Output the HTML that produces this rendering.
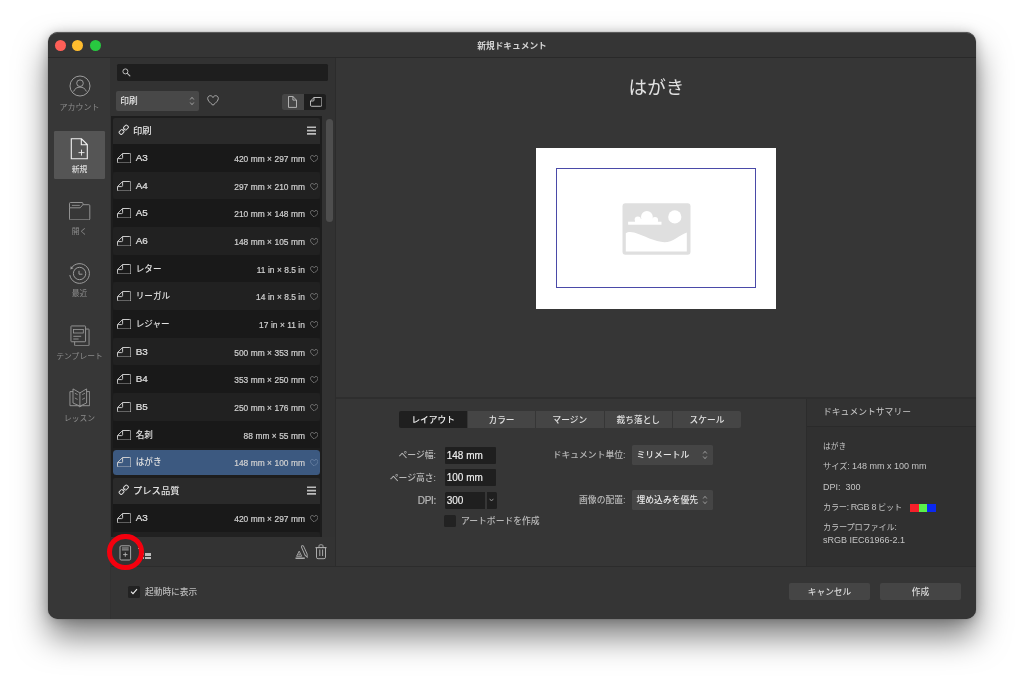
<!DOCTYPE html>
<html lang="ja">
<head>
<meta charset="utf-8">
<title>新規ドキュメント</title>
<style>
*{box-sizing:border-box;margin:0;padding:0}
html,body{width:1024px;height:683px;overflow:hidden;background:#fff}
body{position:relative;font-family:"Liberation Sans","Noto Sans CJK JP",sans-serif;color:#ddd;font-size:9px;line-height:1}
.abs{position:absolute}
#win{will-change:transform;position:absolute;left:48px;top:32px;width:928px;height:587px;border-radius:10px;background:#363636;overflow:hidden}
#shadow{position:absolute;left:48px;top:32px;width:928px;height:587px;border-radius:10px;box-shadow:0 0 1px rgba(0,0,0,.5),0 18px 32px rgba(0,0,0,.5),0 1px 12px rgba(0,0,0,.22)}
#titlebar{position:absolute;left:0;top:0;width:928px;height:26px;background:#353535;border-bottom:1px solid #292929;border-top:1px solid #5a5a5a;border-radius:10px 10px 0 0}
#title{position:absolute;left:0;width:928px;top:8.600px;text-align:center;font-size:8.700px;font-weight:700;color:#d4d4d4;letter-spacing:0}
.tl{position:absolute;top:6.800px;width:11px;height:11px;border-radius:50%}
#sidebar{position:absolute;left:0;top:26px;width:63px;height:561px;background:#373737;border-right:1px solid #323232}
.sbl{position:absolute;left:0;width:63px;text-align:center;font-size:7.8px;color:#8c8c8c}
.sbi{position:absolute;fill:none;stroke:#9c9c9c;stroke-width:1}
#lp{position:absolute;left:63px;top:26px;width:224px;height:509px;background:#323232}
#lpline{position:absolute;left:287px;top:26px;width:1px;height:509px;background:#2c2c2c}
#search{position:absolute;left:5.800px;top:5.500px;width:211.700px;height:17.500px;background:#1e1e1e;border-radius:1.500px}
#dd{position:absolute;left:5px;top:33.300px;width:83px;height:19.800px;background:#484848;border-radius:2px;color:#e6e6e6;font-size:9px}
#list{position:absolute;left:0;top:58px;width:211px;height:421px;background:#1d1d1d;overflow:hidden}
.row{position:absolute;left:2px;width:207px;height:27.7px}
.row.d{background:#191919}
.row.l{background:#212121;border-radius:3px}
.row.h{background:#2a2a2a;height:25.8px;border-radius:2px 2px 0 0}
.row.sel{background:#3c5980;border-radius:3.500px;margin-top:1.500px;height:25.800px !important}
.row.sel .nm,.row.sel .sz,.row.sel svg{margin-top:-1.500px}
.row.sel svg.ht path{stroke:#7088a8}
.row .nm{position:absolute;left:22.700px;top:9px;font-size:9.900px;font-weight:500;-webkit-text-stroke:.2px;color:#e2e2e2}
.row .nm.cj{font-size:8.600px;top:9.800px;-webkit-text-stroke:0}
.row.h .nm{-webkit-text-stroke:0;left:20px;top:8.8px;font-size:9.3px}
.row .sz{position:absolute;right:15px;top:11.2px;font-size:8.4px;font-weight:500;-webkit-text-stroke:.2px;color:#d0d0d0;letter-spacing:.05px}
.row svg.pg{position:absolute;left:3.500px;top:8.500px}
.row svg.ht{position:absolute;right:1.700px;top:10.600px}
.row svg.lk{position:absolute;left:4.600px;top:6.400px;width:11.500px;height:11.500px}
.ham{position:absolute;left:193.800px;top:7.900px;width:9px;height:9px}
.ham i{display:block;height:1.700px;background:#c8c8c8;margin-bottom:1.6px;border-radius:.5px}
#tb{position:absolute;left:63px;top:505px;width:224px;height:30px;background:#333}
#sepline{position:absolute;left:63px;top:534px;width:865px;height:1px;background:#2c2c2c}
#footer{position:absolute;left:63px;top:535px;width:865px;height:52px;background:#353535}
.btn{position:absolute;top:15.800px;height:17px;width:81px;background:#454545;border-radius:2px;text-align:center;font-size:8.700px;font-weight:500;color:#d8d8d8;line-height:19px}
#pv{position:absolute;left:288px;top:26px;width:640px;height:340px;background:#363636}
#pvtitle{position:absolute;left:1px;width:639px;top:20.600px;text-align:center;font-size:18.600px;color:#e2e2e2}
#paper{position:absolute;left:200px;top:90px;width:239.5px;height:161px;background:#fff}
#blue{position:absolute;left:20px;top:19.5px;width:200px;height:120.5px;border:1px solid #4a4aa8}
#optline{position:absolute;left:288px;top:365.300px;width:640px;height:1.600px;background:#2e2e2e;z-index:2}
#opt{position:absolute;left:289px;top:367px;width:470px;height:167px;background:#363636;box-shadow:-1px 0 0 #363636}
.tab{position:absolute;top:12px;height:17px;width:67.6px;padding-top:1px;background:#454545;text-align:center;font-size:8.7px;font-weight:500;color:#e0e0e0;line-height:17px}
.tab.on{background:#1f1f1f;color:#f2f2f2}
.lbl{position:absolute;text-align:right;font-size:8.800px;font-weight:500;color:#b8b8b8;white-space:nowrap}
.inp{position:absolute;background:#1f1f1f;border-radius:1px;color:#f0f0f0;font-size:10px;-webkit-text-stroke:.15px;padding-left:2px}
.sel2{position:absolute;left:295px;width:80.500px;height:20.400px;background:#454545;border-radius:1.500px;color:#e8e8e8;font-size:8.8px;font-weight:500;padding-left:4.500px;line-height:21.500px}
#sum{position:absolute;left:758px;top:366px;width:170px;height:168px;background:#303030;border-left:1px solid #2c2c2c}
#sumh{position:absolute;left:0;top:0;width:169px;height:28.500px;background:#323232;border-bottom:1px solid #2a2a2a}
.st{position:absolute;left:16px;font-size:8.2px;color:#c4c4c4;white-space:nowrap}
.la{font-size:9px}
</style>
</head>
<body>
<div id="shadow"></div>
<div id="win">
  <div id="sidebar">
    <svg class="sbi" style="left:20.500px;top:17.400px" width="22" height="22" viewBox="0 0 22 22"><circle cx="11" cy="11" r="10"/><circle cx="11" cy="8.200" r="3.300"/><path d="M4.600 16.500C5.700 13.600 8.200 12.100 11 12.100C13.800 12.100 16.300 13.600 17.400 16.500"/></svg>
    <div class="sbl" style="top:46.200px;font-size:8px">アカウント</div>
    <div class="abs" style="left:5.5px;top:72.500px;width:51.500px;height:48px;background:#555;border-radius:1.200px"></div>
    <svg class="sbi" style="left:22px;top:80px;stroke:#f2f2f2;stroke-width:1.1" width="19" height="22" viewBox="0 0 19 22"><path d="M1.300 .8H11.500L17.300 6.600V20.800H1.300Z M11.300 .8V6.800H17.300"/><path d="M11.500 11.600V17.600M8.500 14.600H14.500" stroke-width=".9"/></svg>
    <div class="sbl" style="top:108.300px;color:#dcdcdc;font-weight:500">新規</div>
    <svg class="sbi" style="left:20.500px;top:143.800px;stroke-width:.9" width="22" height="18.500" viewBox="0 0 22 18.500"><path d="M.5 5.800V1.500Q.5 .5 1.500 .5H13Q13.900 .5 13.900 1.400V2.700"/><path d="M2.900 3.400H10.800" stroke-width=".8"/><path d="M.5 5.800V16.900Q.5 17.900 1.500 17.900H19.800Q20.800 17.900 20.800 16.900V3.700Q20.800 2.700 19.800 2.700H13.900L11.200 5.800H.5"/></svg>
    <div class="sbl" style="top:169.900px">開く</div>
    <svg class="sbi" style="left:20px;top:203.500px;stroke-width:1" width="23" height="23" viewBox="0 0 23 23"><path d="M3.390 5.990A9.850 9.850 0 1 1 1.830 13.040"/><path d="M2.400 7.400L2.700 4.300L5.500 6.200Z" fill="#9a9a9a" stroke="none"/><circle cx="11.560" cy="11.500" r="6.200"/><path d="M11 8.800V12.200H14.400"/></svg>
    <div class="sbl" style="top:232.100px">最近</div>
    <svg class="sbi" style="left:22.300px;top:266.700px;stroke-width:.9" width="20" height="21.500" viewBox="0 0 20 21.500"><rect x=".95" y=".95" width="14.600" height="15.800" rx=".6"/><path d="M15.550 4.050H18.450Q19.050 4.050 19.050 4.650V20.150Q19.050 20.750 18.450 20.750H5.250Q4.650 20.750 4.650 20.150V16.750"/><rect x="3.500" y="4.400" width="9.800" height="3.600" stroke-width=".8"/><path d="M3.300 11.300H11.200M3.300 14H8.600" stroke-width=".9"/></svg>
    <div class="sbl" style="top:294.600px;font-size:7.800px">テンプレート</div>
    <svg class="sbi" style="left:20.700px;top:329.600px;stroke-width:.9" width="21.600" height="20" viewBox="0 0 21.600 20"><path d="M4 .9L10.900 4.900V18.100L4 15Z"/><path d="M10.900 4.900L17.600 .9V15L10.900 18.100"/><path d="M4 3.600H.95V17.700H8.500Q10 17.900 10.900 19Q11.800 17.900 13.300 17.700H20.650V3.600H17.600"/><path d="M5.800 5.200L8.600 6.600M5.800 10L8.600 11.400M16 5.200L13.200 6.600M16 10L13.200 11.400" stroke-width=".8"/></svg>
    <div class="sbl" style="top:357.400px">レッスン</div>
  </div>
  <div id="lp">
    <div id="search">
      <svg class="abs" style="left:5.300px;top:4.600px" width="9" height="9" viewBox="0 0 9 9"><circle cx="3.400" cy="3.400" r="2.500" fill="none" stroke="#bcbcbc" stroke-width="1"/><path d="M5.300 5.300L7.900 7.900" stroke="#bcbcbc" stroke-width="1.100" stroke-linecap="round"/></svg>
    </div>
    <div id="dd"><span class="abs" style="left:4.200px;top:5.700px;font-weight:500;font-size:8.700px">印刷</span>
      <svg class="abs" style="left:73px;top:5px" width="6" height="10" viewBox="0 0 6 10"><path d="M1.200 3.500L3 1.300L4.800 3.500M1.200 6.500L3 8.700L4.800 6.500" fill="none" stroke="#b0b0b0" stroke-width=".85"/></svg>
    </div>
    <svg class="abs" style="left:95.5px;top:36.5px" width="12" height="11" viewBox="0 0 12 11"><path d="M6 10.2C3 7.8 .7 5.6 .7 3.4C.7 1.8 1.9 .7 3.3 .7C4.5 .7 5.5 1.4 6 2.5C6.5 1.4 7.5 .7 8.7 .7C10.1 .7 11.3 1.8 11.3 3.4C11.3 5.6 9 7.8 6 10.2Z" fill="none" stroke="#b8b8b8" stroke-width=".9"/></svg>
    <div class="abs" style="left:170.600px;top:35.600px;width:22.400px;height:16.800px;background:#464646;border-radius:2.500px 0 0 2.500px"></div>
    <div class="abs" style="left:193px;top:35.600px;width:22.400px;height:16.800px;background:#1e1e1e;border-radius:0 2.500px 2.500px 0"></div>
    <svg class="abs" style="left:176.850px;top:38.150px" width="9" height="12" viewBox="0 0 9 12"><path d="M.5 .5H4.900L8.500 4.100V11.400H.5Z M4.900 .5V4.100H8.500" fill="none" stroke="#c4c4c4" stroke-width=".85"/></svg>
    <svg class="abs" style="left:198.800px;top:38.900px" width="12.400" height="9.800" viewBox="0 0 12.400 9.800"><path d="M4 .5H10.800Q11.900 .5 11.900 1.600V8.200Q11.900 9.300 10.800 9.300H1.600Q.5 9.300 .5 8.200V4Z M4 .5V3.100Q4 4 3.100 4H.5" fill="none" stroke="#cccccc" stroke-width=".9"/></svg>
    <div id="list">
      <div class="row h" style="top:2px;height:26px"><svg class="lk" width="12" height="12" viewBox="0 0 12 12"><g fill="none" stroke="#d6d6d6" stroke-width="1"><rect x="-2.4" y="-1.9" width="4.8" height="3.8" rx="1.1" transform="translate(3.7 8.3) rotate(-45)"/><rect x="-2.4" y="-1.9" width="4.8" height="3.8" rx="1.1" transform="translate(8.3 3.7) rotate(-45)"/><path d="M4.6 7.4L7.4 4.6"/></g></svg><span class="nm">印刷</span><svg class="ham" viewBox="0 0 9 9"><path d="M0 1.300H9M0 4.600H9M0 7.900H9" stroke="#bdbdbd" stroke-width="1.600" fill="none"/></svg></div>
      <div class="row d" style="top:28px;height:28px"><svg class="pg" width="14.400" height="10.600" viewBox="0 0 14.400 10.600"><path d="M5.600 .5H12.700Q13.900 .5 13.900 1.700V8.900Q13.900 10.100 12.700 10.100H1.700Q.5 10.100 .5 8.900V5.600Z M5.600 .5V4.600Q5.600 5.600 4.600 5.600H.5" fill="none" stroke="#d2d2d2" stroke-width=".95"/></svg><span class="nm">A3</span><span class="sz">420 mm × 297 mm</span><svg class="ht" width="8.400" height="7.700" viewBox="0 0 12 11"><path d="M6 10.2C3 7.8 .7 5.6 .7 3.4C.7 1.8 1.9 .7 3.3 .7C4.5 .7 5.5 1.4 6 2.5C6.5 1.4 7.5 .7 8.7 .7C10.1 .7 11.3 1.8 11.3 3.4C11.3 5.6 9 7.8 6 10.2Z" fill="none" stroke="#8a8a8a" stroke-width="1.1"/></svg></div>
      <div class="row l" style="top:56px;height:27px"><svg class="pg" width="14.400" height="10.600" viewBox="0 0 14.400 10.600"><path d="M5.600 .5H12.700Q13.900 .5 13.900 1.700V8.900Q13.900 10.100 12.700 10.100H1.700Q.5 10.100 .5 8.900V5.600Z M5.600 .5V4.600Q5.600 5.600 4.600 5.600H.5" fill="none" stroke="#d2d2d2" stroke-width=".95"/></svg><span class="nm">A4</span><span class="sz">297 mm × 210 mm</span><svg class="ht" width="8.400" height="7.700" viewBox="0 0 12 11"><path d="M6 10.2C3 7.8 .7 5.6 .7 3.4C.7 1.8 1.9 .7 3.3 .7C4.5 .7 5.5 1.4 6 2.5C6.5 1.4 7.5 .7 8.7 .7C10.1 .7 11.3 1.8 11.3 3.4C11.3 5.6 9 7.8 6 10.2Z" fill="none" stroke="#8a8a8a" stroke-width="1.1"/></svg></div>
      <div class="row d" style="top:83px;height:28px"><svg class="pg" width="14.400" height="10.600" viewBox="0 0 14.400 10.600"><path d="M5.600 .5H12.700Q13.900 .5 13.900 1.700V8.900Q13.900 10.100 12.700 10.100H1.700Q.5 10.100 .5 8.900V5.600Z M5.600 .5V4.600Q5.600 5.600 4.600 5.600H.5" fill="none" stroke="#d2d2d2" stroke-width=".95"/></svg><span class="nm">A5</span><span class="sz">210 mm × 148 mm</span><svg class="ht" width="8.400" height="7.700" viewBox="0 0 12 11"><path d="M6 10.2C3 7.8 .7 5.6 .7 3.4C.7 1.8 1.9 .7 3.3 .7C4.5 .7 5.5 1.4 6 2.5C6.5 1.4 7.5 .7 8.7 .7C10.1 .7 11.3 1.8 11.3 3.4C11.3 5.6 9 7.8 6 10.2Z" fill="none" stroke="#8a8a8a" stroke-width="1.1"/></svg></div>
      <div class="row l" style="top:111px;height:28px"><svg class="pg" width="14.400" height="10.600" viewBox="0 0 14.400 10.600"><path d="M5.600 .5H12.700Q13.900 .5 13.900 1.700V8.900Q13.900 10.100 12.700 10.100H1.700Q.5 10.100 .5 8.900V5.600Z M5.600 .5V4.600Q5.600 5.600 4.600 5.600H.5" fill="none" stroke="#d2d2d2" stroke-width=".95"/></svg><span class="nm">A6</span><span class="sz">148 mm × 105 mm</span><svg class="ht" width="8.400" height="7.700" viewBox="0 0 12 11"><path d="M6 10.2C3 7.8 .7 5.6 .7 3.4C.7 1.8 1.9 .7 3.3 .7C4.5 .7 5.5 1.4 6 2.5C6.5 1.4 7.5 .7 8.7 .7C10.1 .7 11.3 1.8 11.3 3.4C11.3 5.6 9 7.8 6 10.2Z" fill="none" stroke="#8a8a8a" stroke-width="1.1"/></svg></div>
      <div class="row d" style="top:139px;height:27px"><svg class="pg" width="14.400" height="10.600" viewBox="0 0 14.400 10.600"><path d="M5.600 .5H12.700Q13.900 .5 13.900 1.700V8.900Q13.900 10.100 12.700 10.100H1.700Q.5 10.100 .5 8.900V5.600Z M5.600 .5V4.600Q5.600 5.600 4.600 5.600H.5" fill="none" stroke="#d2d2d2" stroke-width=".95"/></svg><span class="nm cj">レター</span><span class="sz">11 in × 8.5 in</span><svg class="ht" width="8.400" height="7.700" viewBox="0 0 12 11"><path d="M6 10.2C3 7.8 .7 5.6 .7 3.4C.7 1.8 1.9 .7 3.3 .7C4.5 .7 5.5 1.4 6 2.5C6.5 1.4 7.5 .7 8.7 .7C10.1 .7 11.3 1.8 11.3 3.4C11.3 5.6 9 7.8 6 10.2Z" fill="none" stroke="#8a8a8a" stroke-width="1.1"/></svg></div>
      <div class="row l" style="top:166px;height:28px"><svg class="pg" width="14.400" height="10.600" viewBox="0 0 14.400 10.600"><path d="M5.600 .5H12.700Q13.900 .5 13.900 1.700V8.900Q13.900 10.100 12.700 10.100H1.700Q.5 10.100 .5 8.900V5.600Z M5.600 .5V4.600Q5.600 5.600 4.600 5.600H.5" fill="none" stroke="#d2d2d2" stroke-width=".95"/></svg><span class="nm cj">リーガル</span><span class="sz">14 in × 8.5 in</span><svg class="ht" width="8.400" height="7.700" viewBox="0 0 12 11"><path d="M6 10.2C3 7.8 .7 5.6 .7 3.4C.7 1.8 1.9 .7 3.3 .7C4.5 .7 5.5 1.4 6 2.5C6.5 1.4 7.5 .7 8.7 .7C10.1 .7 11.3 1.8 11.3 3.4C11.3 5.6 9 7.8 6 10.2Z" fill="none" stroke="#8a8a8a" stroke-width="1.1"/></svg></div>
      <div class="row d" style="top:194px;height:28px"><svg class="pg" width="14.400" height="10.600" viewBox="0 0 14.400 10.600"><path d="M5.600 .5H12.700Q13.900 .5 13.900 1.700V8.900Q13.900 10.100 12.700 10.100H1.700Q.5 10.100 .5 8.900V5.600Z M5.600 .5V4.600Q5.600 5.600 4.600 5.600H.5" fill="none" stroke="#d2d2d2" stroke-width=".95"/></svg><span class="nm cj">レジャー</span><span class="sz">17 in × 11 in</span><svg class="ht" width="8.400" height="7.700" viewBox="0 0 12 11"><path d="M6 10.2C3 7.8 .7 5.6 .7 3.4C.7 1.8 1.9 .7 3.3 .7C4.5 .7 5.5 1.4 6 2.5C6.5 1.4 7.5 .7 8.7 .7C10.1 .7 11.3 1.8 11.3 3.4C11.3 5.6 9 7.8 6 10.2Z" fill="none" stroke="#8a8a8a" stroke-width="1.1"/></svg></div>
      <div class="row l" style="top:222px;height:27px"><svg class="pg" width="14.400" height="10.600" viewBox="0 0 14.400 10.600"><path d="M5.600 .5H12.700Q13.900 .5 13.900 1.700V8.900Q13.900 10.100 12.700 10.100H1.700Q.5 10.100 .5 8.900V5.600Z M5.600 .5V4.600Q5.600 5.600 4.600 5.600H.5" fill="none" stroke="#d2d2d2" stroke-width=".95"/></svg><span class="nm">B3</span><span class="sz">500 mm × 353 mm</span><svg class="ht" width="8.400" height="7.700" viewBox="0 0 12 11"><path d="M6 10.2C3 7.8 .7 5.6 .7 3.4C.7 1.8 1.9 .7 3.3 .7C4.5 .7 5.5 1.4 6 2.5C6.5 1.4 7.5 .7 8.7 .7C10.1 .7 11.3 1.8 11.3 3.4C11.3 5.6 9 7.8 6 10.2Z" fill="none" stroke="#8a8a8a" stroke-width="1.1"/></svg></div>
      <div class="row d" style="top:249px;height:28px"><svg class="pg" width="14.400" height="10.600" viewBox="0 0 14.400 10.600"><path d="M5.600 .5H12.700Q13.900 .5 13.900 1.700V8.900Q13.900 10.100 12.700 10.100H1.700Q.5 10.100 .5 8.900V5.600Z M5.600 .5V4.600Q5.600 5.600 4.600 5.600H.5" fill="none" stroke="#d2d2d2" stroke-width=".95"/></svg><span class="nm">B4</span><span class="sz">353 mm × 250 mm</span><svg class="ht" width="8.400" height="7.700" viewBox="0 0 12 11"><path d="M6 10.2C3 7.8 .7 5.6 .7 3.4C.7 1.8 1.9 .7 3.3 .7C4.5 .7 5.5 1.4 6 2.5C6.5 1.4 7.5 .7 8.7 .7C10.1 .7 11.3 1.8 11.3 3.4C11.3 5.6 9 7.8 6 10.2Z" fill="none" stroke="#8a8a8a" stroke-width="1.1"/></svg></div>
      <div class="row l" style="top:277px;height:28px"><svg class="pg" width="14.400" height="10.600" viewBox="0 0 14.400 10.600"><path d="M5.600 .5H12.700Q13.900 .5 13.900 1.700V8.900Q13.900 10.100 12.700 10.100H1.700Q.5 10.100 .5 8.900V5.600Z M5.600 .5V4.600Q5.600 5.600 4.600 5.600H.5" fill="none" stroke="#d2d2d2" stroke-width=".95"/></svg><span class="nm">B5</span><span class="sz">250 mm × 176 mm</span><svg class="ht" width="8.400" height="7.700" viewBox="0 0 12 11"><path d="M6 10.2C3 7.8 .7 5.6 .7 3.4C.7 1.8 1.9 .7 3.3 .7C4.5 .7 5.5 1.4 6 2.5C6.5 1.4 7.5 .7 8.7 .7C10.1 .7 11.3 1.8 11.3 3.4C11.3 5.6 9 7.8 6 10.2Z" fill="none" stroke="#8a8a8a" stroke-width="1.1"/></svg></div>
      <div class="row d" style="top:305px;height:27px"><svg class="pg" width="14.400" height="10.600" viewBox="0 0 14.400 10.600"><path d="M5.600 .5H12.700Q13.900 .5 13.900 1.700V8.900Q13.900 10.100 12.700 10.100H1.700Q.5 10.100 .5 8.900V5.600Z M5.600 .5V4.600Q5.600 5.600 4.600 5.600H.5" fill="none" stroke="#d2d2d2" stroke-width=".95"/></svg><span class="nm cj">名刺</span><span class="sz">88 mm × 55 mm</span><svg class="ht" width="8.400" height="7.700" viewBox="0 0 12 11"><path d="M6 10.2C3 7.8 .7 5.6 .7 3.4C.7 1.8 1.9 .7 3.3 .7C4.5 .7 5.5 1.4 6 2.5C6.5 1.4 7.5 .7 8.7 .7C10.1 .7 11.3 1.8 11.3 3.4C11.3 5.6 9 7.8 6 10.2Z" fill="none" stroke="#8a8a8a" stroke-width="1.1"/></svg></div>
      <div class="row sel" style="top:332px;height:28px"><svg class="pg" width="14.400" height="10.600" viewBox="0 0 14.400 10.600"><path d="M5.600 .5H12.700Q13.900 .5 13.900 1.700V8.900Q13.900 10.100 12.700 10.100H1.700Q.5 10.100 .5 8.900V5.600Z M5.600 .5V4.600Q5.600 5.600 4.600 5.600H.5" fill="none" stroke="#d2d2d2" stroke-width=".95"/></svg><span class="nm cj">はがき</span><span class="sz">148 mm × 100 mm</span><svg class="ht" width="8.400" height="7.700" viewBox="0 0 12 11"><path d="M6 10.2C3 7.8 .7 5.6 .7 3.4C.7 1.8 1.9 .7 3.3 .7C4.5 .7 5.5 1.4 6 2.5C6.5 1.4 7.5 .7 8.7 .7C10.1 .7 11.3 1.8 11.3 3.4C11.3 5.6 9 7.8 6 10.2Z" fill="none" stroke="#8a8a8a" stroke-width="1.1"/></svg></div>
      <div class="row h" style="top:362px;height:26px"><svg class="lk" width="12" height="12" viewBox="0 0 12 12"><g fill="none" stroke="#d6d6d6" stroke-width="1"><rect x="-2.4" y="-1.9" width="4.8" height="3.8" rx="1.1" transform="translate(3.7 8.3) rotate(-45)"/><rect x="-2.4" y="-1.9" width="4.8" height="3.8" rx="1.1" transform="translate(8.3 3.7) rotate(-45)"/><path d="M4.6 7.4L7.4 4.6"/></g></svg><span class="nm">プレス品質</span><svg class="ham" viewBox="0 0 9 9"><path d="M0 1.300H9M0 4.600H9M0 7.900H9" stroke="#bdbdbd" stroke-width="1.600" fill="none"/></svg></div>
      <div class="row d" style="top:388px;height:28px"><svg class="pg" width="14.400" height="10.600" viewBox="0 0 14.400 10.600"><path d="M5.600 .5H12.700Q13.900 .5 13.900 1.700V8.900Q13.900 10.100 12.700 10.100H1.700Q.5 10.100 .5 8.900V5.600Z M5.600 .5V4.600Q5.600 5.600 4.600 5.600H.5" fill="none" stroke="#d2d2d2" stroke-width=".95"/></svg><span class="nm">A3</span><span class="sz">420 mm × 297 mm</span><svg class="ht" width="8.400" height="7.700" viewBox="0 0 12 11"><path d="M6 10.2C3 7.8 .7 5.6 .7 3.4C.7 1.8 1.9 .7 3.3 .7C4.5 .7 5.5 1.4 6 2.5C6.5 1.4 7.5 .7 8.7 .7C10.1 .7 11.3 1.8 11.3 3.4C11.3 5.6 9 7.8 6 10.2Z" fill="none" stroke="#8a8a8a" stroke-width="1.1"/></svg></div>
      <div class="row l" style="top:416px;height:27px"><svg class="pg" width="14.400" height="10.600" viewBox="0 0 14.400 10.600"><path d="M5.600 .5H12.700Q13.900 .5 13.900 1.700V8.900Q13.900 10.100 12.700 10.100H1.700Q.5 10.100 .5 8.900V5.600Z M5.600 .5V4.600Q5.600 5.600 4.600 5.600H.5" fill="none" stroke="#d2d2d2" stroke-width=".95"/></svg><span class="nm">A4</span><span class="sz">297 mm × 210 mm</span><svg class="ht" width="8.400" height="7.700" viewBox="0 0 12 11"><path d="M6 10.2C3 7.8 .7 5.6 .7 3.4C.7 1.8 1.9 .7 3.3 .7C4.5 .7 5.5 1.4 6 2.5C6.5 1.4 7.5 .7 8.7 .7C10.1 .7 11.3 1.8 11.3 3.4C11.3 5.6 9 7.8 6 10.2Z" fill="none" stroke="#8a8a8a" stroke-width="1.1"/></svg></div>
    </div>
    <div class="abs" style="left:215.100px;top:60.500px;width:6.600px;height:103px;border-radius:3.500px;background:#4e4e4e"></div>
  </div>
  <div id="lpline"></div>
  <div id="tb">
    <svg class="abs" style="left:8.400px;top:7.500px" width="13" height="16" viewBox="0 0 13 16"><g fill="none" stroke="#b6b6b6" stroke-width=".9"><rect x="1" y=".8" width="10.600" height="14.200" rx="1.200" fill="#2c2c2c"/><path d="M2.900 3H9.700M2.900 4.900H9.700" stroke-width=".9"/><path d="M6.300 7.400V11.800M4.100 9.600H8.500" stroke-width=".9"/></g></svg>
    <div class="abs" style="left:26.800px;top:11.300px;width:1.500px;height:1px;background:#bbb"></div>
    <div class="abs" style="left:31.500px;top:16.300px;width:1.500px;height:1.500px;background:#aaa"></div>
    <div class="abs" style="left:31.500px;top:20px;width:1.500px;height:1.500px;background:#aaa"></div>
    <div class="abs" style="left:34.300px;top:16.200px;width:5.800px;height:2.500px;background:#bcbcbc"></div>
    <div class="abs" style="left:34.300px;top:19.900px;width:5.800px;height:2.500px;background:#bcbcbc"></div>
    <svg class="abs" style="left:184px;top:7px" width="14" height="16" viewBox="0 0 14 16"><g fill="none" stroke="#ababab" stroke-width=".9"><path d="M1.600 12.300L4.200 7.100L6.700 12.300Z"/><path d="M3.500 11L4.200 9.700L4.900 11Z" stroke-width=".6"/><path d="M.5 14.200H9.800" stroke-width="1.500"/><g transform="translate(7.100 1.700) rotate(-24)"><path d="M-1.150 1.200A1.150 1.150 0 0 1 1.150 1.200V9.800L0 12.600L-1.150 9.800Z"/></g></g></svg>
    <svg class="abs" style="left:203.500px;top:7px" width="12" height="16" viewBox="0 0 12 16"><g fill="none" stroke="#ababab" stroke-width="1"><path d="M4 3.300V1.800Q4 .8 5 .8H7Q8 .8 8 1.800V3.300" stroke-width=".9"/><path d="M.5 3.600H11.500" stroke-width="1.200"/><path d="M1.500 4V13.200Q1.500 14.700 3 14.700H9Q10.500 14.700 10.500 13.200V4"/><path d="M4.800 5.500V12M7.600 5.500V12" stroke-width="1"/></g></svg>
  </div>
  <div id="pv">
    <div id="pvtitle">はがき</div>
    <div id="paper"><div id="blue"></div>
      <svg class="abs" style="left:85.5px;top:54.5px" width="69" height="52" viewBox="0 0 69 52"><rect x=".5" y=".3" width="68" height="51.5" rx="3" fill="#dfdfdf"/><circle cx="52.8" cy="13.9" r="6.6" fill="#fff"/><g fill="#fff"><rect x="6.100" y="18.700" width="33.400" height="3"/><circle cx="24.900" cy="14" r="5.900"/><circle cx="15.800" cy="16.600" r="3.100"/><circle cx="33" cy="17" r="3.100"/><rect x="13" y="16" width="22.800" height="4"/></g><path d="M3.8 30.2C5.5 29 8.5 28.6 12 29.6C22 32.5 33 39.2 42.5 39.2C51 39.2 57 32 64.8 29.4V48.6H3.8Z" fill="#fff"/></svg>
    </div>
  </div>
  <div id="optline"></div>
  <div id="opt">
    <div class="tab on" style="left:62.3px;border-radius:2px 0 0 2px">レイアウト</div>
    <div class="tab" style="left:130.7px">カラー</div>
    <div class="tab" style="left:199.1px">マージン</div>
    <div class="tab" style="left:267.5px">裁ち落とし</div>
    <div class="tab" style="left:335.900px;width:68.200px;border-radius:0 2px 2px 0">スケール</div>

    <div class="lbl" style="right:371px;top:52px">ページ幅:</div>
    <div class="lbl" style="right:371px;top:74.5px">ページ高さ:</div>
    <div class="lbl" style="right:371px;top:96.500px;font-family:'Liberation Sans',sans-serif;font-size:10px;letter-spacing:-.3px;-webkit-text-stroke:.2px">DPI:</div>
    <div class="inp" style="left:107.700px;top:47.5px;width:51.5px;height:17px;line-height:17.5px">148 mm</div>
    <div class="inp" style="left:107.700px;top:70px;width:51.5px;height:17px;line-height:17.5px">100 mm</div>
    <div class="inp" style="left:107.700px;top:92.5px;width:40px;height:17px;line-height:17.5px;border-radius:1.5px 0 0 1.5px">300</div>
    <div class="inp" style="left:149.5px;top:92.5px;width:10px;height:17px;border-radius:0 1.5px 1.5px 0;padding:0"><svg class="abs" style="left:2.5px;top:6px" width="5" height="4" viewBox="0 0 5 4"><path d="M.6 .8L2.5 3L4.4 .8" fill="none" stroke="#aaa" stroke-width=".8"/></svg></div>
    <div class="abs" style="left:107px;top:116px;width:11.5px;height:11.5px;background:#222;border-radius:1.5px"></div>
    <div class="lbl" style="left:124px;top:117.5px;font-weight:500;color:#b8b8b8;font-size:8.8px">アートボードを作成</div>

    <div class="lbl" style="right:181.5px;top:52px;font-weight:500">ドキュメント単位:</div>
    <div class="lbl" style="right:181.5px;top:97px;font-weight:500">画像の配置:</div>
    <div class="sel2" style="top:45.500px">ミリメートル<svg class="abs" style="left:70px;top:5px" width="6" height="10" viewBox="0 0 6 10"><path d="M1.200 3.500L3 1.300L4.800 3.500M1.200 6.500L3 8.700L4.800 6.500" fill="none" stroke="#a8a8a8" stroke-width=".85"/></svg></div>
    <div class="sel2" style="top:90.700px">埋め込みを優先<svg class="abs" style="left:70px;top:5px" width="6" height="10" viewBox="0 0 6 10"><path d="M1.200 3.500L3 1.300L4.800 3.500M1.200 6.500L3 8.700L4.800 6.500" fill="none" stroke="#a8a8a8" stroke-width=".85"/></svg></div>
  </div>
  <div id="sum">
    <div id="sumh"><span class="st" style="top:9.700px;font-size:8.800px;color:#c8c8c8">ドキュメントサマリー</span></div>
    <span class="st" style="top:44.6px;font-size:7.700px">はがき</span>
    <span class="st" style="top:63.5px">サイズ: <span class="la">148 mm x 100 mm</span></span>
    <span class="st" style="top:84.5px"><span class="la">DPI:&nbsp; 300</span></span>
    <span class="st" style="top:105px;letter-spacing:-.3px">カラー: <span class="la">RGB 8</span> ビット</span>
    <div class="abs" style="left:103px;top:105.5px;width:8.7px;height:8.5px;background:#f5202a"></div>
    <div class="abs" style="left:111.7px;top:105.5px;width:8.7px;height:8.5px;background:#5af04a"></div>
    <div class="abs" style="left:120.4px;top:105.5px;width:8.6px;height:8.5px;background:#0a28f0"></div>
    <span class="st" style="top:126px;letter-spacing:-.2px">カラープロファイル:</span>
    <span class="st" style="top:137.5px"><span class="la">sRGB IEC61966-2.1</span></span>
  </div>
  <div id="sepline"></div>
  <div id="footer">
    <div class="abs" style="left:17px;top:19px;width:12px;height:11.5px;background:#222;border-radius:1.5px"></div>
    <svg class="abs" style="left:18.800px;top:20.600px" width="8" height="7" viewBox="0 0 8 7"><path d="M1 3.6L3 5.6L7 1.2" fill="none" stroke="#f0f0f0" stroke-width="1.1"/></svg>
    <span class="abs" style="left:34px;top:21.400px;font-size:8.700px;font-weight:500;color:#b8b8b8">起動時に表示</span>
    <div class="btn" style="left:678px">キャンセル</div>
    <div class="btn" style="left:769px">作成</div>
  </div>
  <div class="abs" style="left:59.400px;top:501.700px;width:36.600px;height:36.600px;border:5px solid #f4000e;border-radius:50%"></div>
  <div id="titlebar">
    <div class="tl" style="left:7.200px;background:#fe5f57"></div>
    <div class="tl" style="left:24.400px;background:#febc2e"></div>
    <div class="tl" style="left:41.600px;background:#28c840"></div>
    <div id="title">新規ドキュメント</div>
  </div>
</div>
</body>
</html>
